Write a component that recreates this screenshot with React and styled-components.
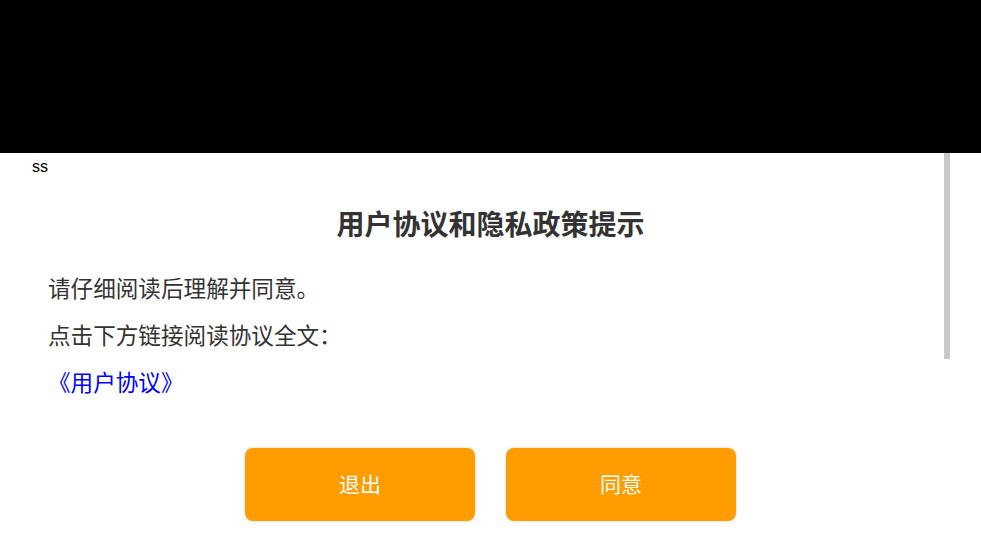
import React from 'react';
import styled, { createGlobalStyle } from 'styled-components';

const GlobalStyle = createGlobalStyle`
  html, body {
    margin: 0;
    padding: 0;
    background: #fff;
  }
  body {
    font-family: "Noto Sans CJK SC", "Noto Sans", sans-serif;
  }
`;

const Page = styled.div`
  width: 100%;
  min-height: 552px;
  background: #fff;
`;

const TopBar = styled.div`
  height: 153px;
  background: #000;
`;

const Body = styled.div`
  position: relative;
`;

// fake scroll thumb sitting over the content
const ScrollThumb = styled.div`
  position: absolute;
  top: 0;
  right: 31px;
  width: 6px;
  height: 206px;
  background: #c8c8c8;
`;

const Label = styled.div`
  padding: 5px 0 0 32px;
  font-family: "Liberation Sans", Arial, sans-serif;
  font-size: 16px;
  line-height: 18px;
  color: #000;
`;

const Title = styled.h1`
  margin: 27px 0 0;
  text-align: center;
  font-size: 28px;
  font-weight: 700;
  line-height: 40px;
  color: #333;
`;

const Text = styled.div`
  padding: 0 48px;
  margin-top: ${(p) => p.$top || 0}px;
  font-size: 22.6px;
  line-height: 47px;
  color: ${(p) => (p.$link ? '#0000ff' : '#333')};
`;

const Actions = styled.div`
  display: flex;
  justify-content: center;
  gap: 31px;
  margin-top: 43px;
`;

const Button = styled.button`
  width: 230px;
  height: 73px;
  padding: 0 0 4px;
  border: none;
  border-radius: 8px;
  background: #ff9c00;
  color: #fff;
  font-family: inherit;
  font-size: 21px;
  box-shadow: 0 0 3px rgba(0, 0, 0, 0.18);
  cursor: pointer;
`;

const App = () => {
  return (
    <>
      <GlobalStyle />
      <Page>
        <TopBar />
        <Body>
          <ScrollThumb />
          <Label>ss</Label>
          <Title>用户协议和隐私政策提示</Title>
          <Text $top={21}>请仔细阅读后理解并同意。</Text>
          <Text>点击下方链接阅读协议全文：</Text>
          <Text $link>《用户协议》</Text>
          <Actions>
            <Button>退出</Button>
            <Button>同意</Button>
          </Actions>
        </Body>
      </Page>
    </>
  );
};

export default App;
